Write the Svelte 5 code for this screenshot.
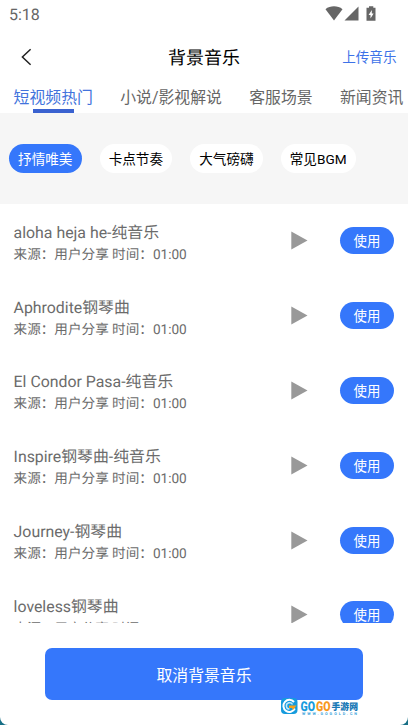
<script>
  let tabs = ['短视频热门', '小说/影视解说', '客服场景', '新闻资讯'];
  let chips = ['抒情唯美', '卡点节奏', '大气磅礴', '常见BGM'];
  let songs = [
    'aloha heja he-纯音乐',
    'Aphrodite钢琴曲',
    'El Condor Pasa-纯音乐',
    'Inspire钢琴曲-纯音乐',
    'Journey-钢琴曲',
    'loveless钢琴曲'
  ];

  let activeTab = $state(0);
  let activeChip = $state(0);
</script>

<div class="screen">
  <div class="page">
    <div class="status-bar">
      <span>5:18</span>
      <svg class="status-icons" width="52" height="16" viewBox="0 0 52 16" fill="#666">
        <path d="M0.5 3.2 C5 -0.6 13 -0.6 17.5 3.2 L9 14.5 Z" />
        <path d="M19.5 14.5 L33.5 14.5 L33.5 0.5 Z" />
        <path d="M41.5 1.8 H44 V0.3 H48.3 V1.8 H50.5 V14.7 H41.5 Z" />
        <path d="M46.8 4 L43.6 9 H45.5 V12.4 L48.6 7.5 H46.8 Z" fill="#fff" />
      </svg>
    </div>

    <header class="header">
      <button class="back" type="button" aria-label="返回">
        <svg width="12" height="18" viewBox="0 0 12 18" fill="none" stroke="#222" stroke-width="1.5">
          <path d="M9.6 1.2 L1.4 9 L9.6 16.8" />
        </svg>
      </button>
      <h1>背景音乐</h1>
      <button class="upload" type="button">上传音乐</button>
    </header>

    <nav class="tabs">
      {#each tabs as tab, i}
        <button type="button" class="tab" class:active={i === activeTab} onclick={() => (activeTab = i)}>{tab}</button>
      {/each}
    </nav>

    <div class="chips">
      {#each chips as chip, i}
        <button type="button" class="chip" class:active={i === activeChip} onclick={() => (activeChip = i)}>{chip}</button>
      {/each}
    </div>

    <ul class="list">
      {#each songs as song}
        <li class="song">
          <div class="info">
            <div class="name">{song}</div>
            <div class="meta">来源：用户分享 时间：01:00</div>
          </div>
          <svg class="play" width="17" height="19" viewBox="0 0 17 19">
            <path d="M0.3 0.5 L16.5 9.5 L0.3 18.5 Z" fill="#999" />
          </svg>
          <button class="use" type="button">使用</button>
        </li>
      {/each}
    </ul>

    <footer class="footer">
      <button class="cancel" type="button">取消背景音乐</button>
    </footer>
  </div>

  <svg class="watermark" width="80" height="20" viewBox="0 0 80 20">
    <rect x="0" y="1" width="16.5" height="16" rx="4" fill="#159bdd" />
    <path d="M13 5 A6 6 0 1 0 13.8 11.5" fill="none" stroke="#fff" stroke-width="2" />
    <path d="M11.5 7.5 A3.2 3.2 0 1 0 8.5 12.1" fill="none" stroke="#bfe8fb" stroke-width="1.5" />
    <path d="M8 8.5 H15.5 L12 13 L11 11 H8 Z" fill="#f8a11b" />
    <g class="brand">
      <text x="19.5" y="13.6" font-size="13.5" textLength="14.5" lengthAdjust="spacingAndGlyphs" fill="#159bdd">GO</text>
      <text x="35" y="13.6" font-size="13.5" textLength="14.5" lengthAdjust="spacingAndGlyphs" fill="#f8981d">GO</text>
      <text x="50.5" y="12.8" font-size="9.5" textLength="26.5" lengthAdjust="spacingAndGlyphs" fill="#1677b5">手游网</text>
    </g>
    <text x="21" y="18.3" font-size="3.8" font-weight="700" textLength="55" fill="#3ea5dc">WWW.GOGOLD.CN</text>
  </svg>
</div>

<style>
  :global(body) {
    margin: 0;
    background: #176f86;
  }

  button {
    border: none;
    padding: 0;
    margin: 0;
    background: none;
    font: inherit;
    color: inherit;
    white-space: nowrap;
    cursor: pointer;
  }

  .screen {
    position: relative;
    width: 408px;
    height: 725px;
    overflow: hidden;
    font-family: Roboto, "Noto Sans CJK SC", sans-serif;
    text-rendering: geometricPrecision;
  }

  .page {
    display: flex;
    flex-direction: column;
    height: 725px;
    background: #fff;
    border-radius: 0 0 8px 8px;
    overflow: hidden;
  }

  .status-bar {
    display: flex;
    justify-content: space-between;
    align-items: center;
    height: 28px;
    padding: 0 31px 0 9px;
    box-sizing: border-box;
    font-size: 16px;
    color: #666;
  }

  .header {
    display: grid;
    grid-template-columns: 1fr auto 1fr;
    align-items: center;
    height: 57px;
    padding: 0 11.5px 0 21px;
    flex: none;
  }

  .header h1 {
    margin: 0;
    padding: 4px 9.5px 0 0;
    font-size: 18px;
    font-weight: 400;
    line-height: 26px;
    color: #000;
  }

  .back {
    display: flex;
    justify-self: start;
  }

  .upload {
    justify-self: end;
    padding-bottom: 2px;
    font-size: 13.6px;
    color: #3d72e8;
  }

  .tabs {
    display: flex;
    flex: none;
    gap: 27.3px;
    height: 28px;
    padding-left: 13.6px;
    overflow: hidden;
  }

  .tab {
    display: flex;
    flex-direction: column;
    align-items: center;
    flex: none;
    height: 28px;
    font-size: 15.87px;
    line-height: 25px;
    color: #666;
  }

  .tab.active {
    color: #4273dc;
  }

  .tab.active::after {
    content: "";
    flex: none;
    width: 41px;
    height: 4px;
    margin-top: -1px;
    background: #3a62d0;
  }

  .chips {
    display: flex;
    flex: none;
    align-items: center;
    gap: 18px;
    height: 91px;
    padding-left: 9px;
    background: #f6f6f6;
  }

  .chip {
    height: 29.5px;
    padding: 0 9.1px 1px;
    border-radius: 15px;
    background: #fff;
    font-size: 13.6px;
    color: #000;
  }

  .chip.active {
    background: #3577fb;
    color: #fff;
  }

  .list {
    flex: none;
    height: 419px;
    margin: 0;
    padding: 0;
    overflow: hidden;
    list-style: none;
  }

  .song {
    display: flex;
    align-items: center;
    height: 74.8px;
    padding: 0 14px 0 13.6px;
  }

  .info {
    flex: 1;
    padding-top: 5px;
    color: #6b6b6b;
  }

  .name {
    font-size: 15.87px;
    line-height: 23px;
  }

  .meta {
    font-size: 13.6px;
    line-height: 23px;
  }

  .play {
    margin-top: -1px;
    margin-right: 32px;
  }

  .use {
    width: 54px;
    height: 27px;
    padding-bottom: 1px;
    margin-top: -1px;
    border-radius: 14px;
    background: #3577fb;
    font-size: 13.4px;
    color: #fff;
  }

  .footer {
    display: flex;
    justify-content: center;
    padding-top: 25px;
  }

  .cancel {
    width: 318px;
    height: 52px;
    border-radius: 7px;
    background: #3577fb;
    font-size: 15.87px;
    color: #fff;
  }

  .watermark {
    position: absolute;
    left: 281px;
    top: 697px;
  }

  .brand {
    font-weight: 900;
    stroke: #fff;
    stroke-width: 1px;
    paint-order: stroke;
  }
</style>
